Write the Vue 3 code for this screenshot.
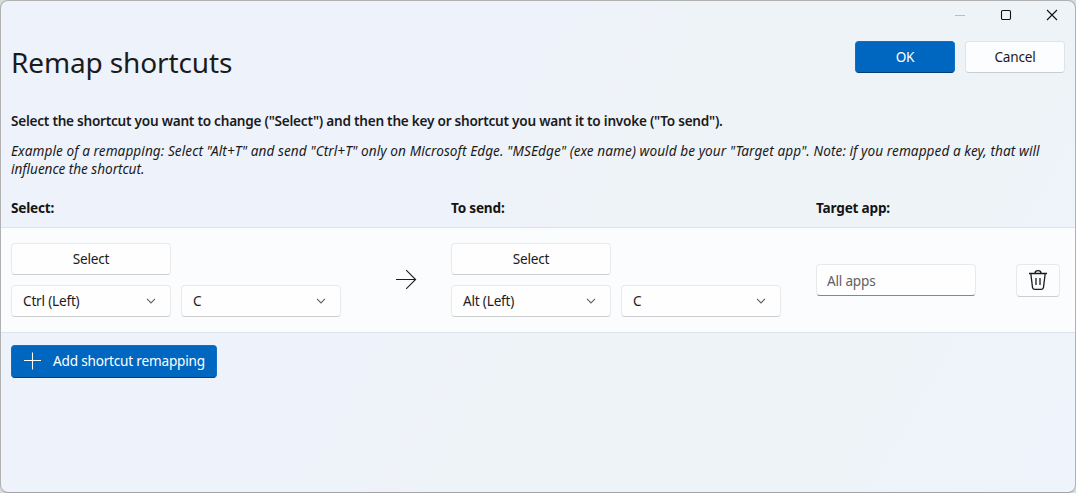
<script setup>
import { ref } from 'vue'

const sides = ref([
  { name: 'from', keys: ['Ctrl (Left)', 'C'] },
  { name: 'to', keys: ['Alt (Left)', 'C'] },
])
const targetApp = ref('')
</script>

<template>
  <main class="window">
    <header class="top">
      <h1>Remap shortcuts</h1>
      <div class="right">
        <div class="caption">
          <svg width="12" height="12" viewBox="0 0 12 12" class="min"><path d="M1 6.5h10" /></svg>
          <svg width="12" height="12" viewBox="0 0 12 12"><rect x="1.5" y="1.5" width="9" height="9" rx="1.2" /></svg>
          <svg width="12" height="12" viewBox="0 0 12 12"><path d="M1 1l10 10M11 1L1 11" /></svg>
        </div>
        <div class="actions">
          <button class="btn accent ok">OK</button>
          <button class="btn cancel">Cancel</button>
        </div>
      </div>
    </header>

    <p class="lead">Select the shortcut you want to change ("Select") and then the key or shortcut you want it to invoke ("To send").</p>
    <p class="example">
      <span class="l1">Example of a remapping: Select "Alt+T" and send "Ctrl+T" only on Microsoft Edge. "MSEdge" (exe name) would be your "Target app". Note: if you remapped a key, that will</span><br />
      <span class="l2">influence the shortcut.</span>
    </p>

    <div class="cols heads">
      <b>Select:</b><span></span><b>To send:</b><b>Target app:</b>
    </div>

    <section class="cols row">
      <template v-for="side in sides" :key="side.name">
        <div class="picker">
          <button class="btn wide">Select</button>
          <div class="combos">
            <button v-for="k in side.keys" :key="k" class="btn combo">
              <span>{{ k }}</span>
              <svg width="10" height="6" viewBox="0 0 10 6"><path d="M1 .9l4 4 4-4" /></svg>
            </button>
          </div>
        </div>
        <svg v-if="side.name === 'from'" class="arrow" width="22" height="20" viewBox="0 0 22 20">
          <path d="M0 10.5h19.6M10.2 1.2l9.4 9.3-9.4 9.3" />
        </svg>
      </template>
      <input v-model="targetApp" class="app" placeholder="All apps" />
      <button class="btn trash">
        <svg width="20" height="22" viewBox="0 0 20 22">
          <path d="M1 4.5h18M2.8 4.5l1.7 13.9q.2 1.9 2 1.9h7q1.8 0 2-1.9l1.7-13.9M7 4.3q0-2.6 3-2.6t3 2.6M8 9v7M12 9v7" />
        </svg>
      </button>
    </section>

    <button class="btn accent add">
      <svg width="18" height="18" viewBox="0 0 18 18"><path d="M8.5 .5v17M0 8.5h17" /></svg>
      <span>Add shortcut remapping</span>
    </button>
  </main>
</template>

<style>
html,
body {
  margin: 0;
  background: #d9dadb;
}
</style>

<style scoped>
* {
  box-sizing: border-box;
}
.window {
  width: 1076px;
  height: 493px;
  overflow: hidden;
  border: 1px solid #b1b1b2;
  border-bottom-color: #a2a3a5;
  border-radius: 8px;
  background: linear-gradient(120deg, #eef2fb 0%, #eef2fb 38%, #eef3f8 52%, #eef3f8 78%, #eff3fb 95%);
  color: #1b1b1c;
  font: 13.6px/18px "Noto Sans", "Open Sans", sans-serif;
  letter-spacing: -0.2px;
}
svg {
  display: block;
  flex: none;
  fill: none;
  stroke: currentColor;
  stroke-width: 1.1;
}
.top {
  display: flex;
  justify-content: space-between;
  height: 110px;
  padding-left: 10px;
}
h1 {
  margin: 0;
  padding-top: 41px;
  font-size: 28px;
  line-height: 40px;
  font-weight: 400;
  letter-spacing: -0.13px;
}
.caption {
  display: flex;
  justify-content: flex-end;
  gap: 34px;
  padding: 8px 17px 0 0;
  height: 40px;
}
.caption svg {
  color: #111;
}
.caption .min {
  color: #babdc1;
  stroke-width: 1;
}
.actions {
  display: flex;
  gap: 10px;
  padding-right: 10px;
}
.btn {
  display: flex;
  align-items: center;
  justify-content: center;
  height: 32px;
  margin: 0;
  padding: 0 0 1px;
  border: 1px solid #e7e9eb;
  border-bottom-color: #cbcdcf;
  border-radius: 4px;
  background: #fefefe;
  color: #1b1b1c;
  font: inherit;
  letter-spacing: inherit;
}
.ok,
.cancel {
  width: 100px;
}
.cancel {
  border-color: #dfe4e8;
  border-bottom-color: #c8cdd2;
  background: #fcfdfe;
}
.accent {
  border-color: #1070c6;
  border-bottom-color: #003e73;
  background: #0067c0;
  color: #fff;
}
.lead,
.example {
  margin: 0;
  padding-left: 10px;
  white-space: nowrap;
}
.lead {
  padding-top: 1px;
  font-weight: 600;
  letter-spacing: -0.245px;
}
.example {
  padding-top: 12px;
  font-style: italic;
  letter-spacing: 0.073px;
}
.l2 {
  letter-spacing: -0.04px;
}
.cols {
  display: grid;
  grid-template-columns: 385px 55px 365px 200px 44px;
  padding-left: 10px;
}
.heads {
  grid-template-columns: 385px 55px 365px 200px;
  padding-top: 21px;
  height: 49px;
  color: #141415;
}
.row {
  align-items: center;
  height: 106px;
  border: solid #dce2e8;
  border-width: 1px 0;
  background: #fbfcfe;
}
.heads b:first-child {
  grid-column: span 2;
}
.heads span {
  display: none;
}
.picker {
  display: grid;
  gap: 10px;
}
.combos {
  display: flex;
  gap: 10px;
}
.wide,
.combo {
  width: 160px;
}
.combo {
  justify-content: space-between;
  padding: 0 14px 1px 11px;
}
.combo svg {
  color: #606164;
}
.arrow {
  margin-bottom: 2px;
}
.app {
  width: 160px;
  height: 32px;
  padding: 0 10px;
  border: 1px solid #e7e9eb;
  border-bottom-color: #868789;
  border-radius: 4px;
  background: #fefefe;
  font: inherit;
  letter-spacing: inherit;
}
.app::placeholder {
  color: #606164;
  opacity: 1;
}
.trash {
  width: 44px;
  height: 33px;
  background: #fcfdfe;
}
.trash svg {
  stroke-width: 1.3;
}
.add {
  justify-content: flex-start;
  gap: 11px;
  width: 206px;
  height: 33px;
  margin: 12px 0 0 10px;
  padding-left: 12px;
}
</style>
